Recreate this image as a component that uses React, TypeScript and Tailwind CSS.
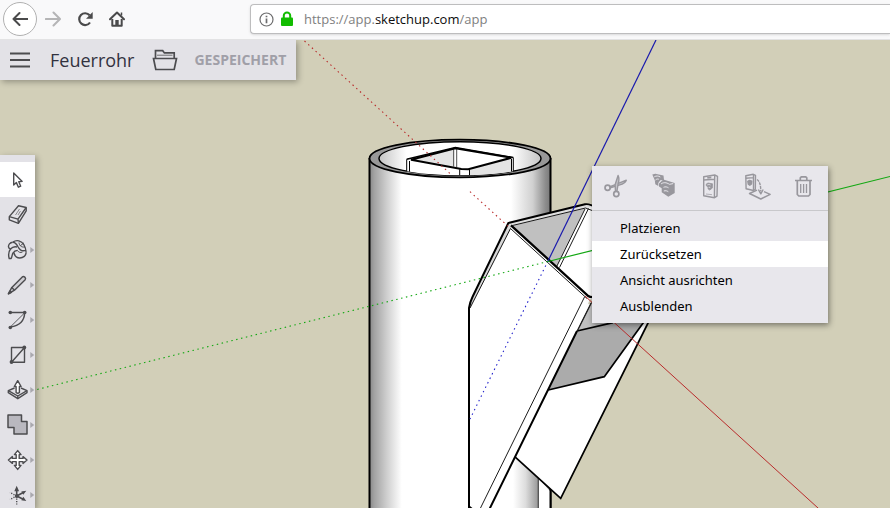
import type { ReactNode } from "react";
import clsx from "clsx";

type Tool = {
  label: string;
  active?: boolean;
  more?: boolean;
  icon: ReactNode;
};

const tools: Tool[] = [
  {
    label: "Auswahl",
    active: true,
    icon: (
      <path
        d="M13.7 11v12l2.7-2.4 2 4.6 2.3-1-1.9-4.5 3.4-.3z"
        fill="#fff"
      />
    ),
  },
  {
    label: "Radiergummi",
    icon: (
      <>
        <path d="M18.500 8.800l7.700 1.700v3.300l-7.800 12.500-9.100-3.500v-3.200z" />
        <path d="M9.300 19.600l8.700 2.500 8.200-11.600M18 22.100l.4 4" />
        <path d="M15.500 18l4-6M18 18l2.500-4" strokeWidth="0.6" />
      </>
    ),
  },
  {
    label: "Farbeimer",
    more: true,
    icon: (
      <>
        <path d="M13 10c3.500-2.500 8.500-1.500 10.800 2.500 1.300 2.300 2.300 5.500 2.300 8" />
        <path d="M12.800 10.300c-3 .2-4.500 2.500-4.300 4.500.2 1.500 1 2 2 2.200-1.500 2-2.300 6-1.300 9.500h2c1-1.800.8-4 1.800-5.500 1-1.700 2.700-2.500 4.600-2.600" />
        <path d="M13 10.200c2.500.3 3.700 1.800 5 4.500 1.700 3.300 4.500 5 8 3.500" />
        <path d="M10.500 17c1.500-1.700 4-2.700 6.500-2M13.800 20.500c.7 3 3 5.500 6 5.500 3.500 0 6.300-2.500 6.300-5.500" />
        <path d="M19 10.500c.3 2.800 2 5 5.800 4.500M20.300 13.800l3.700-3M17.500 18.500c1 1.800 3 2.500 5 1.500" strokeWidth="1" />
      </>
    ),
  },
  {
    label: "Linien",
    more: true,
    icon: (
      <>
        <path d="M8.400 26.800l3.400-6.400L22.300 9.900c1.500-1.200 4.200.9 2.900 2.800L14.500 23.200z" fill="#cfced3" />
        <path d="M11.800 20.400l2.700 2.800" />
        <path d="M8.400 26.800l1.500-2.700 1.500 1.200z" fill="#4c4c4f" />
      </>
    ),
  },
  {
    label: "Bogen",
    more: true,
    icon: (
      <>
        <path d="M10.300 10.500h14.400M24.700 10.500c-.2 8-5.500 13.300-14.400 14.500" />
        <path d="M24 11.500L11 24.300" strokeWidth="0.900" />
        <g fill="#4c4c4f" stroke="none">
          <circle cx="10.300" cy="10.500" r="1.800" />
          <circle cx="24.700" cy="10.500" r="1.800" />
          <circle cx="10.300" cy="25.500" r="1.800" />
        </g>
      </>
    ),
  },
  {
    label: "Rechteck",
    more: true,
    icon: (
      <>
        <path d="M11.500 10.500h13v14.700h-13zM11.500 25.200l13-14.700" />
        <g fill="#4c4c4f" stroke="none">
          <circle cx="24.300" cy="10.500" r="1.900" />
          <circle cx="11.500" cy="25" r="1.900" />
        </g>
      </>
    ),
  },
  {
    label: "Drücken/Ziehen",
    more: true,
    icon: (
      <>
        <path d="M14.500 16l-6.200 2.700v2l9.500 6 9.200-6v-2L21 16" />
        <path d="M8.300 18.700l9.500 5.300 9.200-5.300M17.800 24v2.500" />
        <path
          d="M17.700 8.700l3.400 5.800h-1.700v6c-1 .8-2.300.8-3.300 0v-6h-1.800z"
          fill="#fff"
        />
      </>
    ),
  },
  {
    label: "Äußere Schale",
    more: true,
    icon: (
      <path
        d="M8 8h13.500v6.500H27V27H14v-6.500H8z"
        fill="#b9b8bf"
        strokeWidth="1.500"
      />
    ),
  },
  {
    label: "Verschieben",
    more: true,
    icon: (
      <path
        d="M17.700 8.600l3.300 4h-1.800v3.800H23v-1.800l4 3.400-4 3.400v-1.800h-3.800v3.800H21l-3.300 4-3.300-4h1.800v-3.800h-3.800v1.800l-4-3.400 4-3.400v1.800h3.800v-3.800h-1.800z"
        fill="#fff"
      />
    ),
  },
  {
    label: "Achsen",
    more: true,
    icon: (
      <>
        <path d="M16.700 19v-7M16.700 19l7-3.700M16.700 19l7 3.500" strokeWidth="1.600" />
        <path
          d="M16.700 19l-6.700-3.500M16.700 19L10 22.500M16.700 19v8.500"
          strokeDasharray="1.200 1.300"
        />
        <g fill="#4c4c4f" stroke="none">
          <path d="M16.700 8.700l2.400 5.600h-4.800zM26.300 13.800l-3 4-2-3.400zM26.300 24l-5-.7 2-3.600z" />
          <circle cx="16.700" cy="19" r="1.900" />
        </g>
      </>
    ),
  },
];

const menuActions: { label: string; icon: ReactNode }[] = [
  {
    label: "Ausschneiden",
    icon: (
      <>
        <g strokeWidth="1.700">
          <circle cx="15.600" cy="21.700" r="2.600" />
          <circle cx="24.300" cy="28" r="2.600" />
        </g>
        <path d="M18 20.700l5.300-2 11-4.500c-1 2.500-3.300 3.800-6.500 4.700l-9.500 3z" fill="#c4c3c9" />
        <path d="M23.500 25.300l-.4-6.500 3-9.300c1.200 2.500 1.200 5 0 8.500l-1.200 7.300z" fill="#c4c3c9" />
      </>
    ),
  },
  {
    label: "Kopieren",
    icon: (
      <>
        <g fill="#98979d" stroke="none">
          <path d="M13.300 8.500l3-.8 8.200 1.800.5 4.500-3.700.3-2 2.700v3l-3-1.800-.5-4z" />
          <path d="M20 17.500l4.300-4L35.700 17v10l-6.400 3.700-6.600-4.500v-4L20 20.500z" />
        </g>
        <g stroke="#e8e7ec" strokeWidth="1">
          <path d="M15.300 10.800c2-1.200 4-1 6 .2M16.500 14c1-1 2-1.200 3.300-.8" />
          <path d="M22 18c2.200-1.800 5.200-1.800 8.500.3M24.500 21.300c1.800-.8 3.500-.5 5 .5M24.800 25c1.700-.5 3-.3 4.500.7M30.500 18.300l3.700-.7" />
        </g>
      </>
    ),
  },
  {
    label: "Komponente erstellen",
    icon: (
      <>
        <path d="M17.700 10.700l11-1.700 2.800 1.400-.5 19.800-2.500 1.500-10.800-2z" />
        <path d="M28.700 9.500l-.3 22M17.700 14l10.900-.7" />
        <path d="M21.300 11.800l4-.4" strokeWidth="1.800" />
        <path
          d="M20.300 18l1.700-1 4.500.8-.2 4.300-2.600 2-1.700-1.300v-2l-1.700-1z"
          fill="#98979d"
          strokeWidth="0.800"
        />
        <path d="M21.300 18.900c1.100-.6 2.300-.5 3.300.1M22.600 21.300h1.700" stroke="#e8e7ec" strokeWidth="0.800" />
        <path d="M20 28l6 .7" strokeWidth="0.700" />
      </>
    ),
  },
  {
    label: "Komponente einfügen",
    icon: (
      <>
        <path d="M12.800 9.700L20.300 8.300l2.200 1-.2 14-1.800 1.200-7.400-1.800z" />
        <path d="M20.500 8.700v15.500M12.800 12.200l7.500-.6" />
        <path d="M14.800 15.300l1.700-.8 2.300.6-.3 2.900-1.700 1.200-1.500-1z" fill="#98979d" />
        <path d="M24 13.500c2.800 2 3.800 6 3.800 12" strokeDasharray="3 0.800" />
        <path d="M25.400 23.500l2.400 4.300 2.400-4.300" />
        <path d="M24 24.200l-7.500 3.300 11.300 5.500 9.400-4.700-6.200-2.600" />
      </>
    ),
  },
  {
    label: "Löschen",
    icon: (
      <>
        <path d="M15 14.500h17M20.300 14.300v-2.500l1-1h4.500l1 1v2.500" strokeWidth="1.700" />
        <path d="M17.300 15v13.500l1.500 1.500h9.700l1.500-1.500V15" strokeWidth="1.700" />
        <path d="M20.700 18v9M23.600 18v9M26.500 18v9" strokeWidth="1.300" />
      </>
    ),
  },
];

const menuItems = ["Platzieren", "Zurücksetzen", "Ansicht ausrichten", "Ausblenden"];

function BrowserBar() {
  return (
    <header className="flex h-10 shrink-0 items-start border-b border-[#e3e3e4] bg-[#f9f9fa]">
      <nav className="flex h-[38px] items-center pl-[3px]">
        <button
          aria-label="Zurück"
          className="flex size-[34px] items-center justify-center rounded-full border border-[#b1b1b1] bg-white"
        >
          <svg width="16" height="16" viewBox="0 0 16 16" fill="none" stroke="#4a4a4b" strokeWidth="2">
            <path d="M15.500 8H1.500M7.500 2L1.500 8l6 6" strokeLinecap="round" strokeLinejoin="round" />
          </svg>
        </button>
        <button aria-label="Vor" className="flex h-8 w-8 items-center justify-center">
          <svg width="16" height="16" viewBox="0 0 16 16" fill="none" stroke="#b5b5b6" strokeWidth="2">
            <path d="M.8 8h14M8.500 1.500L15 8l-6.500 6.500" strokeLinecap="round" strokeLinejoin="round" />
          </svg>
        </button>
        <button aria-label="Neu laden" className="flex h-8 w-8 items-center justify-center">
          <svg width="16" height="16" viewBox="0 0 16 16" fill="none">
            <path d="M13 11.500A5.900 5.900 0 1 1 12.600 4.300" stroke="#4a4a4b" strokeWidth="2.200" />
            <path d="M15.700 1v6.700H9z" fill="#4a4a4b" />
          </svg>
        </button>
        <button aria-label="Startseite" className="flex h-8 w-8 items-center justify-center">
          <svg width="16" height="16" viewBox="0 0 16 16" fill="none" stroke="#4a4a4b" strokeWidth="2">
            <path d="M1 8.300L8 1.500l7 6.800" strokeLinecap="round" strokeLinejoin="round" />
            <path d="M3.300 8v6.700h9.400V8" strokeLinejoin="round" />
            <path d="M6.300 14.500V9h3.400v5.500z" fill="#4a4a4b" stroke="none" />
            <path d="M12.500 1.500v3" strokeWidth="1.500" />
          </svg>
        </button>
      </nav>
      <div className="mt-1 ml-[117px] flex h-[30px] flex-1 items-center rounded-l-sm border border-r-0 border-[#bdbdbe] bg-white pl-2 shadow-sm">
        <svg width="15" height="15" viewBox="0 0 15 15" fill="none" stroke="#6d6d6e">
          <circle cx="7.500" cy="7.500" r="6.500" strokeWidth="1.200" />
          <path d="M7.500 6.500v4.700M7.500 3.700v1.600" strokeWidth="1.700" />
        </svg>
        <svg className="ml-1.5" width="14" height="16" viewBox="0 0 14 16">
          <path d="M3.800 7.500V4.600a3.200 3.200 0 0 1 6.400 0v2.900" fill="none" stroke="#12bc00" strokeWidth="2" />
          <rect x="1" y="6.500" width="12" height="8.500" rx="1" fill="#12bc00" />
        </svg>
        <div
          role="textbox"
          aria-label="Adresse"
          contentEditable
          suppressContentEditableWarning
          className="ml-2.5 flex-1 pt-0.5 text-[13px] whitespace-nowrap text-[#808080]"
        >
          https://app.<span className="text-[#0c0c0d]">sketchup.com</span>/app
        </div>
      </div>
    </header>
  );
}

function TitleBar() {
  return (
    <div className="absolute top-0 left-0 flex h-10 items-center bg-[#e3e2e7] px-2.5 shadow-[2px_2px_6px_rgba(0,0,0,0.3)]">
      <button aria-label="Menü">
        <svg width="20" height="16" viewBox="0 0 20 16" stroke="#4c4c4f" strokeWidth="1.800">
          <path d="M0 1.500h20M0 8h20M0 14.500h20" />
        </svg>
      </button>
      <h1 className="ml-5 text-lg text-[#32323f]">Feuerrohr</h1>
      <button aria-label="Öffnen" className="ml-[18px]">
        <svg width="26" height="22" viewBox="0 0 26 22" fill="none" stroke="#4c4c4f" strokeWidth="1.700">
          <path d="M3.500 9V1.700h7.200l1.700 2.200h9.800V9" />
          <path d="M5 6.200h15.500" strokeWidth="0.800" />
          <path d="M1.500 9.500h23l-2.300 11H3.800z" />
        </svg>
      </button>
      <button className="ml-4 text-sm font-bold text-[#a09fa8]">GESPEICHERT</button>
    </div>
  );
}

function Toolbar() {
  return (
    <div className="absolute top-[115px] bottom-0 left-0 w-[35px] overflow-hidden bg-[#e3e2e7] pt-[7px] shadow-[2px_2px_6px_rgba(0,0,0,0.3)]">
      {tools.map((tool) => (
        <button
          key={tool.label}
          aria-label={tool.label}
          className={clsx("block size-[35px]", tool.active && "bg-white")}
        >
          <svg
            width="35"
            height="35"
            viewBox="0 0 35 35"
            fill="none"
            stroke="#4c4c4f"
            strokeWidth="1.400"
            strokeLinejoin="round"
          >
            {tool.icon}
            {tool.more && <path d="M30.300 15l4 3-4 3z" fill="#a9a8ae" stroke="none" />}
          </svg>
        </button>
      ))}
    </div>
  );
}

function ContextMenu() {
  return (
    <div className="absolute top-[126px] left-[592px] w-[236px] bg-[#e8e7ec] pb-1 shadow-[1px_2px_6px_rgba(0,0,0,0.45)]">
      <div className="flex h-[45px] border-b border-[#c8c8cb]">
        {menuActions.map((action) => (
          <button key={action.label} aria-label={action.label} className="w-[47px]">
            <svg
              width="47"
              height="44"
              viewBox="0 0 47 44"
              fill="none"
              stroke="#98979d"
              strokeWidth="1.400"
              strokeLinejoin="round"
            >
              {action.icon}
            </svg>
          </button>
        ))}
      </div>
      <ul className="pt-1">
        {menuItems.map((item) => (
          <li key={item}>
            <button
              className={clsx(
                "block h-[26px] w-full pt-0.5 pl-7 text-left font-['Noto_Sans',sans-serif] text-[13px] text-black",
                item === "Zurücksetzen" && "bg-white"
              )}
            >
              {item}
            </button>
          </li>
        ))}
      </ul>
    </div>
  );
}

function Scene() {
  return (
    <svg className="absolute inset-0 size-full" fill="none" stroke="#000">
      <defs>
        <linearGradient id="body" gradientUnits="userSpaceOnUse" x1="369" y1="0" x2="551" y2="0">
          <stop offset="0" stopColor="#858585" />
          <stop offset="0.03" stopColor="#a3a3a3" />
          <stop offset="0.1" stopColor="#d0d0d0" />
          <stop offset="0.18" stopColor="#fff" />
          <stop offset="0.78" stopColor="#fff" />
          <stop offset="0.9" stopColor="#d0d0d0" />
          <stop offset="0.97" stopColor="#8c8c8c" />
          <stop offset="1" stopColor="#777" />
        </linearGradient>
        <linearGradient id="inner" gradientUnits="userSpaceOnUse" x1="379" y1="0" x2="541" y2="0">
          <stop offset="0" stopColor="#c4c4c4" />
          <stop offset="0.17" stopColor="#fff" />
          <stop offset="0.82" stopColor="#fff" />
          <stop offset="1" stopColor="#c4c4c4" />
        </linearGradient>
        <linearGradient id="shade" gradientUnits="userSpaceOnUse" x1="513" y1="0" x2="538" y2="0">
          <stop offset="0" stopColor="#fff" />
          <stop offset="0.5" stopColor="#ddd" />
          <stop offset="1" stopColor="#999" />
        </linearGradient>
        <clipPath id="opening">
          <ellipse cx="460" cy="158.500" rx="81" ry="16.800" />
        </clipPath>
      </defs>

      <g transform="translate(0 -40)">
        {/* pipe */}
        <path d="M369.500 158V900H550.500V158" fill="url(#body)" strokeWidth="2" />
        <ellipse cx="460" cy="158.500" rx="90.500" ry="18.800" fill="#989898" strokeWidth="1.800" />
        <ellipse cx="460" cy="158.500" rx="81" ry="16.800" fill="url(#inner)" strokeWidth="1.500" />
        <g clipPath="url(#opening)">
          <path d="M406.700 159.500L455.300 147.300l58 10V180H406.700z" fill="#fff" stroke="none" />
          <path d="M411 159.700l43-11.400V167z" fill="#e4e4e4" stroke="none" />
          <path d="M469.500 169.300l42-11.500V180h-42z" fill="#e4e4e4" stroke="none" />
          <path d="M453.700 148.500v18M456.700 148.500v18.500" strokeWidth="0.700" />
          <path d="M406.700 159.300V180M409.500 161V180M513.300 157.500V180M511.500 159V180M459.700 169.300V180M469.500 169.300V180" />
          <path d="M406.700 159.300l48.600-11.800 58 10" strokeWidth="1.500" />
          <path d="M411 159.700l44.300-11.500 56 9.600-43 11.500-7-.2z" strokeWidth="2" />
        </g>

        {/* lower leg of the tilted profile */}
        <path d="M513 450l37 41v409h-37z" fill="#fff" stroke="none" />
        <path d="M505 447h33v453h-33z" fill="url(#shade)" stroke="none" />
        <path d="M538.300 470v430" strokeWidth="1.200" stroke="#444" />
        <path d="M550.500 480v420" strokeWidth="2" />
        <path d="M576 300l72 22.700-87.300 175.600-45.700-41.500z" fill="#fff" stroke="none" />
        <path d="M515 456.800l45.700 41.500L652 315" strokeWidth="1.700" />
        <path d="M592 301l-15 30 36-8.300 10-12z" fill="#c0c0c0" stroke="none" />
        <path d="M577 331l36-8.300 30-9v9l-38.700 54-56 13.300z" fill="#ababab" stroke="none" />
        <path d="M577 331l36-8.300M548.300 390l56-13.300L646 319" strokeWidth="1.700" />
        <path d="M592 302l-14 28" strokeWidth="0.700" />

        {/* front face and rim */}
        <path d="M469 303L508.300 223l76.700-18.700q4-1 12 3.700V300l-7-1-13 32L490 508l-10 20h-11z" fill="#fff" stroke="none" />
        <path d="M469 310q1-8 3.700-13.500L508.300 223l3.500 3L470.500 308z" fill="#d8d8d8" stroke="none" />
        <path d="M508.300 223l76.700-18.700 7 2.700-5 1-74.500 18z" fill="#e0e0e0" stroke="none" />
        <path d="M512 226l73-17.500-28.500 58.500z" fill="#c0c0c0" stroke="none" />
        <path d="M469 508V308q1-6 3.700-11.500L508.300 223l76.700-18.700q4-1 12 3.700" strokeWidth="2" />
        <path d="M469 506.500l5 4M577 331L489 510" strokeWidth="2" />
        <path d="M511 225.300L588.300 296q2 1.500 6 1" strokeWidth="2.300" />
        <path d="M470 308L510.500 228.500l76.500 70M512.500 225.500l73-17.500 8 3M585 209l-28.300 57.500M588.500 208.500L559.500 267.500M584.500 297L480.500 508M591 303l-14 28" strokeWidth="0.900" />

        {/* axes */}
        <path d="M548 261L656 40" stroke="#1a1aad" strokeWidth="1.200" />
        <path d="M548 261.500l684-170" stroke="#13a813" strokeWidth="1.200" />
        <path d="M585 296l466 424" stroke="#b92c2c" />
        <g strokeDasharray="1.500 3.500" strokeWidth="1.100">
          <path d="M548 261L470 419" stroke="#2222cc" />
          <path d="M548 261.500L35 390" stroke="#13a813" />
          <path d="M304.500 41L450 173.500M470 191.700l38 34.500" stroke="#b92c2c" />
        </g>
      </g>
    </svg>
  );
}

export default function App() {
  return (
    <div className="flex h-screen flex-col overflow-hidden font-['Open_Sans',sans-serif]">
      <BrowserBar />
      <main className="relative flex-1 overflow-hidden bg-[#d2cfb8]">
        <Scene />
        <TitleBar />
        <Toolbar />
        <ContextMenu />
      </main>
    </div>
  );
}
